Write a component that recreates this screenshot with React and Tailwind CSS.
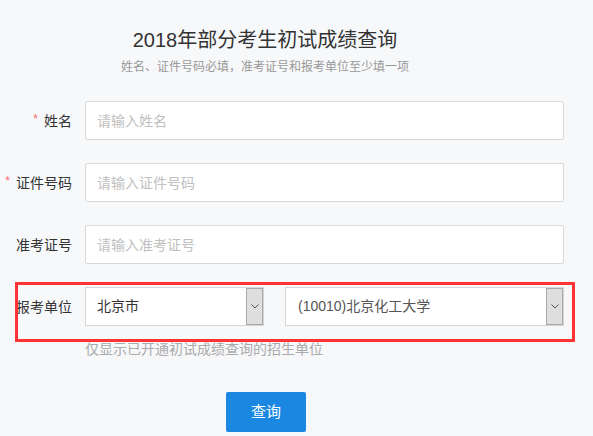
import { useState } from 'react';

const FONT = { fontFamily: '"Liberation Sans", "Noto Sans CJK SC", sans-serif' };

function Field({ label, required, placeholder }) {
  return (
    <div className="flex items-center h-[39px]">
      <div className="w-[72px] flex justify-end items-center text-[14px] text-[#333] leading-none">
        {required && <span className="text-[#f56c6c] text-[12px] mr-[6px] relative top-[-2px]">*</span>}
        {label}
      </div>
      <input
        type="text"
        placeholder={placeholder}
        className="ml-[13px] w-[479px] h-[39px] bg-white border border-[#d9d9d9] rounded-[2px] px-[11px] text-[14px] text-[#333] placeholder:text-[#c0c0c0] outline-none"
        style={FONT}
      />
    </div>
  );
}

function FakeSelect({ value, width, textClass }) {
  return (
    <div className={`${width} h-[39px] bg-white border border-[#d4d4d4] flex items-stretch`}>
      <div className={`flex-1 flex items-center text-[14px] ${textClass}`}>{value}</div>
      <div className="w-[17px] bg-[#dedede] border border-[#a9a9a9] flex items-center justify-center">
        <svg width="8" height="5" viewBox="0 0 8 5" fill="none">
          <path d="M0.5 0.5 L4 4 L7.5 0.5" stroke="#555" strokeWidth="1" />
        </svg>
      </div>
    </div>
  );
}

export default function App() {
  const [province] = useState('北京市');
  const [school] = useState('(10010)北京化工大学');

  return (
    <div className="w-[593px] h-[436px] bg-[#f7f8fa] overflow-hidden relative" style={FONT}>
      <div className="w-[530px] text-center pt-[29px]">
        <h1 className="text-[20px] leading-[22px] text-[#333]">2018年部分考生初试成绩查询</h1>
        <p className="mt-[9px] text-[12px] leading-[14px] text-[#999]">
          姓名、证件号码必填，准考证号和报考单位至少填一项
        </p>
      </div>

      <div className="mt-[27px] flex flex-col gap-[23px]">
        <Field label="姓名" required placeholder="请输入姓名" />
        <Field label="证件号码" required placeholder="请输入证件号码" />
        <Field label="准考证号" placeholder="请输入准考证号" />
      </div>

      <div className="mt-[23px] flex items-center">
        <div className="w-[72px] text-right text-[14px] text-[#333] leading-none">报考单位</div>
        <div className="ml-[13px] flex gap-[21px]">
          <FakeSelect value={province} width="w-[179px]" textClass="pl-[11px] text-[#333]" />
          <FakeSelect value={school} width="w-[279px]" textClass="pl-[12px] text-[#555]" />
        </div>
      </div>

      <p className="ml-[85px] mt-[15px] text-[14px] leading-[16px] text-[#aaa]">
        仅显示已开通初试成绩查询的招生单位
      </p>

      <div className="ml-[226px] mt-[35px]">
        <button className="w-[80px] h-[40px] bg-[#1a87e0] text-white text-[15px] rounded-[2px]" style={FONT}>
          查询
        </button>
      </div>

      {/* red highlight annotation */}
      <div className="absolute left-[15px] top-[282px] w-[560px] h-[60px] border-[3px] border-[#ff3333] pointer-events-none" />
    </div>
  );
}
